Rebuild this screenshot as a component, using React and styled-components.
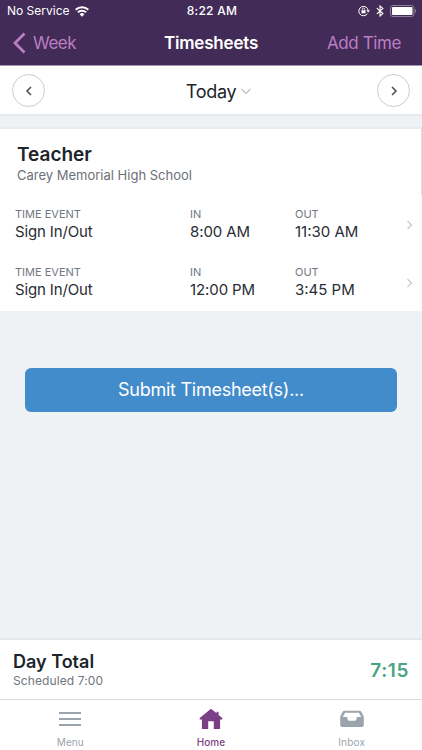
import React from 'react';
import styled, { createGlobalStyle } from 'styled-components';

const timeEvents = [
  { id: 1, name: 'Sign In/Out', timeIn: '8:00 AM', timeOut: '11:30 AM' },
  { id: 2, name: 'Sign In/Out', timeIn: '12:00 PM', timeOut: '3:45 PM' },
];

const GlobalStyle = createGlobalStyle`
  * {
    box-sizing: border-box;
  }

  body {
    margin: 0;
    font-family: Inter, 'Liberation Sans', sans-serif;
    color: #20242b;
  }

  button {
    font: inherit;
    color: inherit;
    padding: 0;
    border: none;
    background: none;
  }
`;

const Text = styled.span`
  display: block;
  width: ${(props) => (props.$width ? `${props.$width}px` : 'auto')};
  font-size: ${(props) => props.$size}px;
  line-height: ${(props) => props.$line || 20}px;
  font-weight: ${(props) => props.$weight || 400};
  letter-spacing: ${(props) => props.$spacing || 0}px;
  color: ${(props) => props.$color || 'inherit'};
  white-space: nowrap;
`;

const Screen = styled.div`
  display: flex;
  flex-direction: column;
  width: 422px;
  height: 750px;
  background: #eef2f5;
  overflow: hidden;
`;

const Header = styled.header`
  height: 66px;
  background: #422b57;
  border-bottom: 1px solid #a696b1;
  color: #fff;
`;

const StatusBar = styled.div`
  display: grid;
  grid-template-columns: 1fr auto 1fr;
  align-items: center;
  height: 22px;
  padding: 0 5px 0 7px;
`;

const StatusGroup = styled.div`
  display: flex;
  align-items: center;
  justify-content: ${(props) => (props.$end ? 'flex-end' : 'flex-start')};
  gap: 6px;
`;

const NavBar = styled.nav`
  display: grid;
  grid-template-columns: 1fr auto 1fr;
  align-items: center;
  height: 42px;
  padding: 0 21px 0 13px;
`;

const NavTitle = styled.h1`
  margin: 0;
  padding-left: 8px;
`;

const NavButton = styled.button`
  display: flex;
  align-items: center;
  justify-self: ${(props) => (props.$end ? 'end' : 'start')};
  gap: 7px;
  color: #bd7dc5;
`;

const DayPicker = styled.div`
  display: flex;
  align-items: center;
  justify-content: space-between;
  height: 50px;
  padding: 0 12px;
  background: #fff;
  border-bottom: 2px solid #e6eaee;
`;

const RoundButton = styled.button`
  display: flex;
  align-items: center;
  justify-content: center;
  width: 33px;
  height: 33px;
  border: 1px solid #c9ccd4;
  border-radius: 50%;
  color: #454a52;

  svg {
    margin-top: 1px;
  }
`;

const Today = styled.button`
  display: flex;
  align-items: center;
  gap: 5px;
  padding: 3px 0 0 15px;

  svg {
    color: #b7bbc2;
  }
`;

const JobHeader = styled.section`
  height: 68px;
  margin-top: 11px;
  padding: 16px 16px 0 17px;
  background: #fff;
  border-top: 2px solid #e8ecf0;
  border-right: 1px solid #d9dce1;
`;

const EventList = styled.section`
  height: 116px;
  background: #fff;
`;

const EventRow = styled.div`
  display: grid;
  grid-template-columns: 175px 105px 1fr 8px;
  height: 58px;
  padding: 12px 8px 0 15px;
`;

const RowArrow = styled.div`
  padding-top: 13px;
  color: #c6cad0;

  svg {
    display: block;
  }
`;

const Content = styled.main`
  flex: 1;
  padding: 57px 25px 0;
`;

const SubmitButton = styled.button`
  display: flex;
  justify-content: center;
  align-items: center;
  width: 372px;
  height: 44px;
  border-radius: 6px;
  background: #438ccb;
  color: #fff;
`;

const DayTotal = styled.section`
  display: flex;
  align-items: center;
  justify-content: space-between;
  height: 61px;
  padding: 2px 13px 0;
  background: #fff;
  border-top: 2px solid #e5e9ed;
`;

const TabBar = styled.nav`
  display: grid;
  grid-template-columns: repeat(3, 1fr);
  height: 51px;
  background: #fff;
  border-top: 1px solid #dadcdf;
`;

const Tab = styled.button`
  display: flex;
  flex-direction: column;
  align-items: center;
  padding-top: 7px;
  color: ${(props) => (props.$active ? '#7b3f85' : '#9ba3ad')};

  svg {
    display: block;
    height: 26px;
    margin-bottom: 2px;
  }
`;

const Chevron = ({ width, height, points, stroke = 1.5 }) => (
  <svg width={width} height={height} viewBox={`0 0 ${width} ${height}`} fill="none" stroke="currentColor" strokeWidth={stroke}>
    <polyline points={points} />
  </svg>
);

const WifiIcon = () => (
  <svg width="14" height="11" viewBox="0 0 14 11" fill="none" stroke="currentColor" strokeWidth="2">
    <path d="M.7 3.7a9 9 0 0 1 12.6 0M2.9 6.4a5.8 5.8 0 0 1 8.2 0" />
    <path d="M4.7 8.2a3.2 3.2 0 0 1 4.6 0L7 10.7z" fill="currentColor" stroke="none" />
  </svg>
);

const LockIcon = () => (
  <svg width="12" height="12" viewBox="0 0 12 12" fill="none" stroke="currentColor">
    <path d="M9.5 8.6A4.7 4.7 0 1 1 10.2 5.6" />
    <path d="m8.3 5.3 1.9 2.1 1.7-2.1z" fill="currentColor" stroke="none" />
    <rect x="3.5" y="5.3" width="4" height="3" fill="currentColor" stroke="none" />
    <path d="M4.3 5.4V4.3a1.2 1.2 0 0 1 2.4 0v1.1" strokeWidth=".8" />
  </svg>
);

const BluetoothIcon = () => (
  <svg width="8" height="12" viewBox="0 0 8 12" fill="none" stroke="currentColor" strokeWidth="1.1">
    <path d="m.8 3.2 6.1 5.4L4 11V1l2.9 2.4L.8 8.8" />
  </svg>
);

const BatteryIcon = () => (
  <svg width="27" height="12" viewBox="0 0 27 12">
    <rect x=".5" y=".5" width="23.5" height="11" rx="2.5" fill="none" stroke="#8d7e9a" />
    <rect x="2" y="2" width="20.5" height="8" rx="1" fill="#fff" />
    <path d="M25 4c1.3.4 1.3 3.6 0 4z" fill="#8d7e9a" />
  </svg>
);

const MenuIcon = () => (
  <svg width="22" height="26" viewBox="0 0 22 26" stroke="currentColor" strokeWidth="2">
    <path d="M0 6h22M0 12h22M0 18h22" />
  </svg>
);

const HomeIcon = () => (
  <svg width="24" height="26" viewBox="0 0 24 26" fill="currentColor">
    <path d="M12 1.8 17.6 6.3V4.8h2V8l3.7 3v1.6h-2.2V22h-6.3v-7.7H9.2V22H2.9v-9.4H.7V11z" />
  </svg>
);

const InboxIcon = () => (
  <svg width="24" height="26" viewBox="0 0 24 26" fill="currentColor" fillRule="evenodd">
    <path d="M4.5 3.8h15q1.2 0 1.8 1l2.1 4q.4.7.4 1.5v7.8q0 2-2 2H2.2q-2 0-2-2v-7.8q0-.8.4-1.5l2.1-4q.6-1 1.8-1zM5.1 5.7 2.7 10h4.7v1.7q0 2 2 2h5.2q2 0 2-2V10h4.7l-2.4-4.3z" />
  </svg>
);

const EventField = ({ label, value, spacing }) => (
  <div>
    <Text $size={11} $line={15} $color="#727780">{label}</Text>
    <Text $size={15} $line={20} $color="#292d33" $spacing={spacing}>{value}</Text>
  </div>
);

const App = () => {
  return (
    <Screen>
      <GlobalStyle />
      <Header>
        <StatusBar>
          <StatusGroup>
            <Text $size={12} $width={62}>No Service</Text>
            <WifiIcon />
          </StatusGroup>
          <Text $size={12} $weight={500} $spacing={0.3}>8:22 AM</Text>
          <StatusGroup $end>
            <LockIcon />
            <BluetoothIcon />
            <BatteryIcon />
          </StatusGroup>
        </StatusBar>
        <NavBar>
          <NavButton>
            <Chevron width={13} height={22} points="11.5,1.5 2,11 11.5,20.5" stroke={2.8} />
            <Text $size={17} $spacing={-0.5}>Week</Text>
          </NavButton>
          <NavTitle>
            <Text $size={17} $weight={600} $spacing={-0.2}>Timesheets</Text>
          </NavTitle>
          <NavButton $end>
            <Text $size={17} $spacing={-0.4}>Add Time</Text>
          </NavButton>
        </NavBar>
      </Header>
      <DayPicker>
        <RoundButton>
          <Chevron width={8} height={10} points="6,1 2,5 6,9" />
        </RoundButton>
        <Today>
          <Text $size={18} $spacing={-0.3}>Today</Text>
          <Chevron width={10} height={7} points="0.5,1 5,5.5 9.5,1" stroke={1.1} />
        </Today>
        <RoundButton>
          <Chevron width={8} height={10} points="2,1 6,5 2,9" />
        </RoundButton>
      </DayPicker>
      <JobHeader>
        <Text $size={19} $line={20} $weight={600}>Teacher</Text>
        <Text $size={13} $line={20} $color="#6c7077">Carey Memorial High School</Text>
      </JobHeader>
      <EventList>
        {timeEvents.map((event) => (
          <EventRow key={event.id}>
            <EventField label="TIME EVENT" value={event.name} spacing={-0.15} />
            <EventField label="IN" value={event.timeIn} spacing={-0.1} />
            <EventField label="OUT" value={event.timeOut} />
            <RowArrow>
              <Chevron width={8} height={10} points="1.5,1 5.5,5 1.5,9" stroke={1.2} />
            </RowArrow>
          </EventRow>
        ))}
      </EventList>
      <Content>
        <SubmitButton>
          <Text $size={18} $spacing={-0.27}>Submit Timesheet(s)...</Text>
        </SubmitButton>
      </Content>
      <DayTotal>
        <div>
          <Text $size={18} $weight={600}>Day Total</Text>
          <Text $size={12} $line={18} $color="#70757d" $spacing={0.1}>Scheduled 7:00</Text>
        </div>
        <Text $size={19} $weight={600} $spacing={0.6} $color="#4aa384">7:15</Text>
      </DayTotal>
      <TabBar>
        <Tab>
          <MenuIcon />
          <Text $size={10} $line={14} $spacing={0.1}>Menu</Text>
        </Tab>
        <Tab $active>
          <HomeIcon />
          <Text $size={10} $line={14} $weight={500} $spacing={0.1}>Home</Text>
        </Tab>
        <Tab>
          <InboxIcon />
          <Text $size={10} $line={14} $spacing={0.2}>Inbox</Text>
        </Tab>
      </TabBar>
    </Screen>
  );
};

export default App;
